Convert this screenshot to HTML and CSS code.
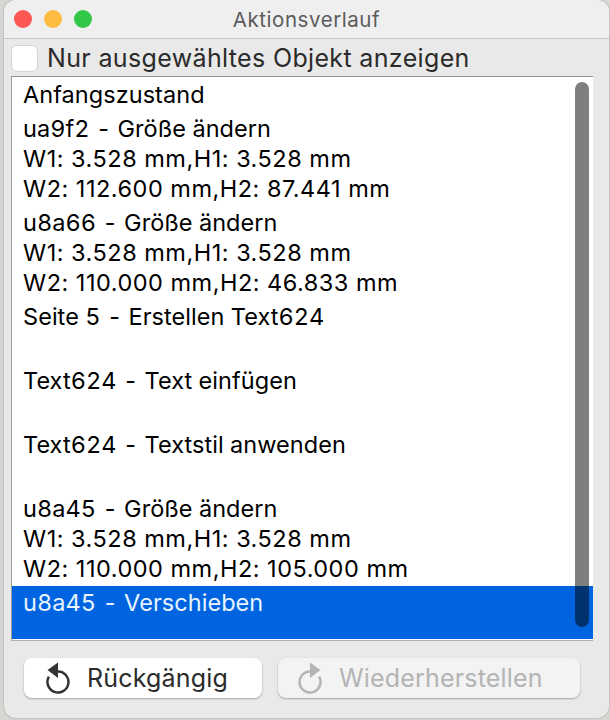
FILE: index.html
```html
<!DOCTYPE html>
<html>
<head>
  <meta charset="utf-8">
  <title>Aktionsverlauf</title>
  <link rel="stylesheet" href="styles.css">
</head>
<body>
  <div class="window">
    <div class="titlebar">
      <div class="traffic">
        <span class="light red"></span>
        <span class="light yellow"></span>
        <span class="light green"></span>
      </div>
      <div class="title">Aktionsverlauf</div>
    </div>

    <div class="content">
      <label class="only-selected">
        <span class="checkbox"></span>
        <span>Nur ausgewähltes Objekt anzeigen</span>
      </label>

      <div class="list">
        <div class="row">Anfangszustand</div>
        <div class="row">ua9f2 - Größe ändern
          <div class="dims">W1: 3.528 mm,H1: 3.528 mm</div>
          <div class="dims">W2: 112.600 mm,H2: 87.441 mm</div>
        </div>
        <div class="row">u8a66 - Größe ändern
          <div class="dims">W1: 3.528 mm,H1: 3.528 mm</div>
          <div class="dims">W2: 110.000 mm,H2: 46.833 mm</div>
        </div>
        <div class="row two">Seite 5 - Erstellen Text624</div>
        <div class="row two">Text624 - Text einfügen</div>
        <div class="row two">Text624 - Textstil anwenden</div>
        <div class="row">u8a45 - Größe ändern
          <div class="dims">W1: 3.528 mm,H1: 3.528 mm</div>
          <div class="dims">W2: 110.000 mm,H2: 105.000 mm</div>
        </div>
        <div class="row selected">u8a45 - Verschieben</div>
        <div class="scrollbar"></div>
      </div>

      <div class="buttons">
        <button class="btn">
          <svg class="btn-icon" viewBox="0 0 28 32">
            <path d="M13 9.5A10.5 10.5 0 1 1 3.9 14.7" fill="none" stroke="#333" stroke-width="2.5"/>
            <path d="M13 0.5v15.5L2.5 8z" fill="#333"/>
          </svg>
          <span>Rückgängig</span>
        </button>
        <button class="btn" disabled>
          <svg class="btn-icon" viewBox="0 0 28 32">
            <path d="M15 9.5A10.5 10.5 0 1 0 24.1 14.7" fill="none" stroke="#b4b4b4" stroke-width="2.5"/>
            <path d="M15 0.5v15.5L25.5 8z" fill="#b4b4b4"/>
          </svg>
          <span>Wiederherstellen</span>
        </button>
      </div>
    </div>
  </div>
</body>
</html>
```
FILE: styles.css
```css
* {
  margin: 0;
  padding: 0;
  box-sizing: border-box;
}

body {
  width: 610px;
  height: 720px;
  overflow: hidden;
  background: #d8d6d2;
  font-family: 'Inter', 'Liberation Sans', sans-serif;
}

.window {
  width: 605px;
  height: 718px;
  margin-left: 4px;
  background: #e9e9e9;
  border-radius: 12px;
  box-shadow: 0 0 2px rgba(0, 0, 0, 0.3);
  overflow: hidden;
  display: flex;
  flex-direction: column;
}

.titlebar {
  height: 39px;
  flex-shrink: 0;
  background: #efeff0;
  border-bottom: 1px solid #c6c6c6;
  display: flex;
  align-items: center;
  justify-content: center;
  position: relative;
}

.traffic {
  position: absolute;
  left: 10px;
  top: 10px;
  display: flex;
  gap: 12px;
}

.light {
  width: 18px;
  height: 18px;
  border-radius: 50%;
}

.light.red { background: #fc5753; }
.light.yellow { background: #fdbc40; }
.light.green { background: #33c748; }

.title {
  font-size: 20.5px;
  letter-spacing: 0.55px;
  color: #5b5b5b;
}

.content {
  flex: 1;
  display: flex;
  flex-direction: column;
  padding: 0 16px 0 7px;
}

.only-selected {
  height: 37px;
  padding-top: 1px;
  display: flex;
  align-items: center;
  gap: 9px;
  font-size: 25px;
  letter-spacing: 0.35px;
  color: #2b2b2b;
}

.checkbox {
  width: 27px;
  height: 27px;
  background: #fff;
  border: 1px solid #d4d4d4;
  border-radius: 6px;
}

.list {
  height: 565px;
  background: #fff;
  border: 1px solid #8f8f8f;
  border-left-color: #a0a0a0;
  border-right: none;
  border-bottom-color: #b0b0b0;
  position: relative;
  overflow: hidden;
}

.row {
  padding: 3px 11px 1px;
  font-size: 23.5px;
  font-variant-numeric: tabular-nums;
  letter-spacing: 0.05px;
  line-height: 30px;
  color: #000;
}

.dims {
  font-variant-numeric: normal;
  letter-spacing: 0.5px;
}

.row.two {
  height: 64px;
}

.row.selected {
  margin-top: 1px;
  padding-top: 2px;
  height: 53px;
  background: #0064e1;
  color: #e8f4ff;
}

.scrollbar {
  position: absolute;
  top: 5px;
  right: 4px;
  width: 14px;
  height: 545px;
  border-radius: 7px;
  background: rgba(0, 0, 0, 0.5);
}

.buttons {
  display: grid;
  grid-template-columns: 238px 1fr;
  gap: 16px;
  padding: 17px 13px 0 13px;
}

.btn {
  height: 40px;
  padding-left: 21px;
  background: #fff;
  border: none;
  border-radius: 8px;
  box-shadow: 0 1px 2px rgba(0, 0, 0, 0.3);
  display: flex;
  align-items: center;
  gap: 14px;
  font-family: inherit;
  font-size: 25px;
  letter-spacing: 0.18px;
  color: #2b2b2b;
}

.btn:disabled {
  padding-left: 17px;
  gap: 16px;
  background: #f3f3f3;
  color: #b4b4b4;
}

.btn-icon {
  width: 28px;
  height: 32px;
  flex-shrink: 0;
}
```
